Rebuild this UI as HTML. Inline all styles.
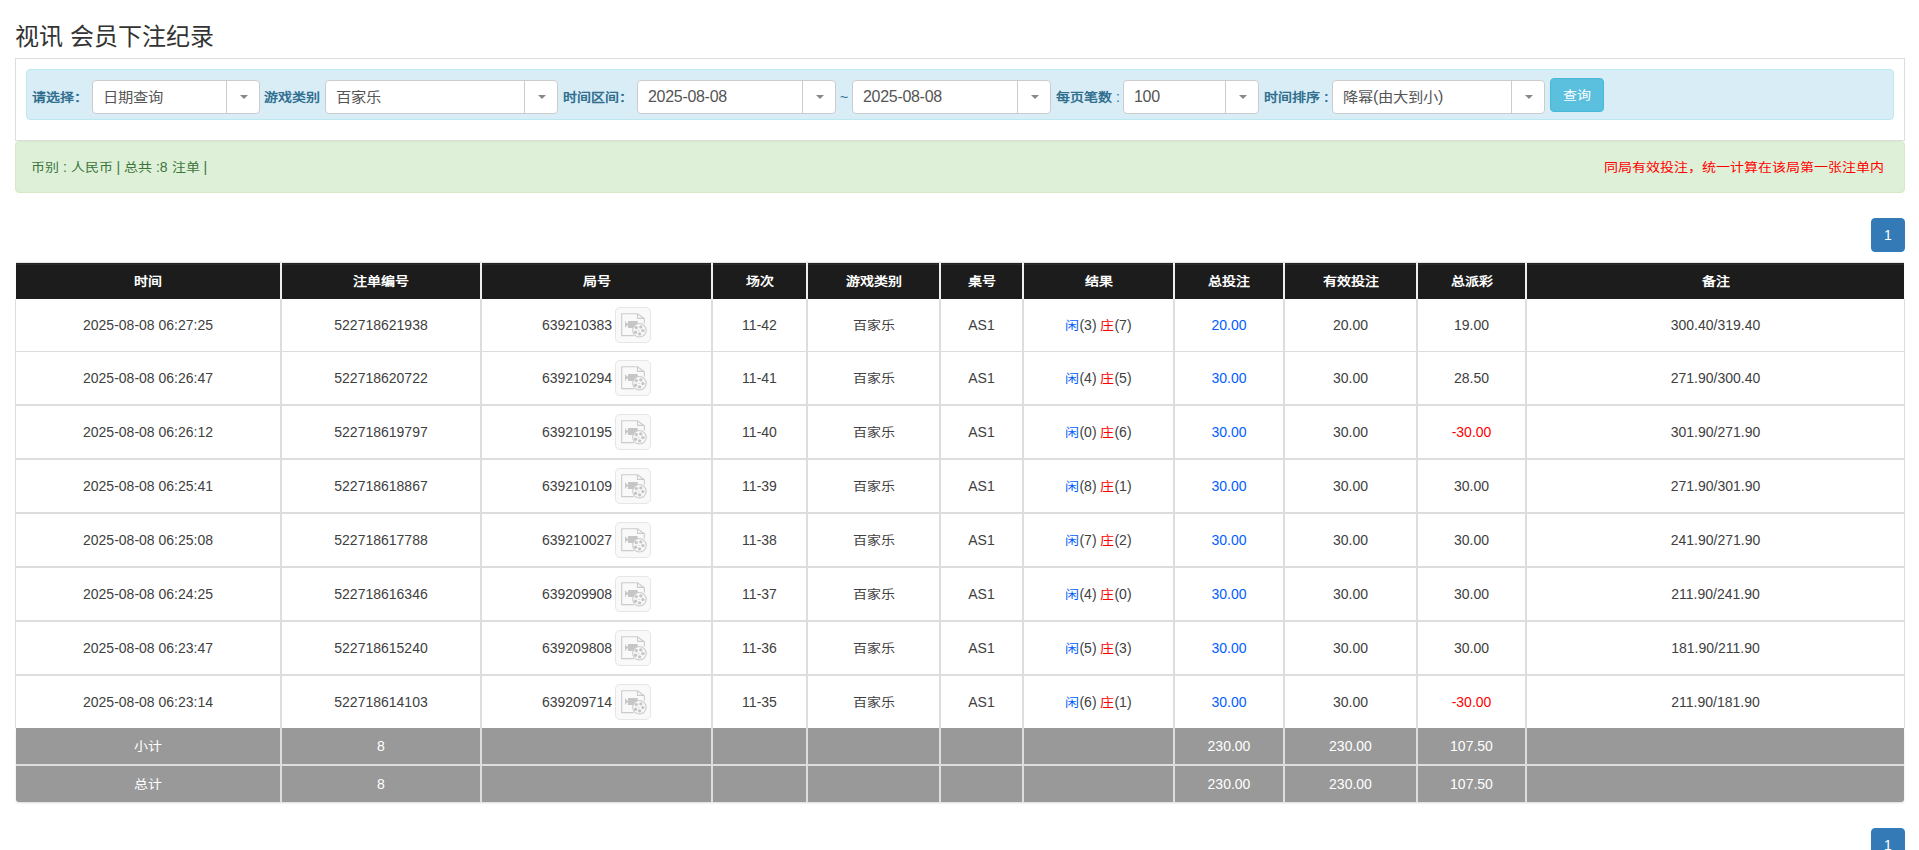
<!DOCTYPE html>
<html lang="zh-CN"><head><meta charset="utf-8"><title>视讯 会员下注纪录</title>
<style>
*{box-sizing:border-box}
html,body{margin:0;padding:0;background:#fff}
body{font-family:"Liberation Sans",sans-serif;font-size:14px;color:#333;width:1919px;height:850px;overflow:hidden;position:relative}
h3{position:absolute;left:15px;top:22px;margin:0;font-size:24px;font-weight:normal;line-height:30px;color:#333;white-space:nowrap}
.panel{position:absolute;left:15px;top:58px;width:1890px;height:83px;border:1px solid #ddd;background:#fff}
.info{position:absolute;left:26px;top:69px;width:1868px;height:51px;border:1px solid #bce8f1;background:#d9edf7;border-radius:4px}
.lb{position:absolute;top:86px;line-height:22px;font-weight:bold;color:#31708f;font-size:14px;white-space:nowrap}
.sel{position:absolute;top:80px;height:34px;border:1px solid #ccc;border-radius:4px;background:#fff}
.sel .t{position:absolute;left:10px;top:0;line-height:32px;font-size:16px;letter-spacing:-.3px;color:#555;white-space:nowrap}
.sel .dv{position:absolute;right:32px;top:0;width:1px;height:32px;background:#ccc}
.sel .ar{position:absolute;right:11px;top:14px;width:0;height:0;border-left:4px solid transparent;border-right:4px solid transparent;border-top:4.5px solid #888}
.btn{position:absolute;left:1550px;top:78px;width:54px;height:34px;background:#5bc0de;border:1px solid #46b8da;border-radius:4px;color:#fff;text-align:center;line-height:32px;font-size:14px}
.ok{position:absolute;left:15px;top:141px;width:1890px;height:52px;border:1px solid #d6e9c6;background:#dff0d8;border-radius:4px;font-size:14px}
.ok .l{position:absolute;left:15px;top:15px;line-height:20px;color:#3c763d;white-space:nowrap}
.ok .r{position:absolute;right:20px;top:15px;line-height:20px;color:#f00;white-space:nowrap}
.pg{position:absolute;left:1871px;width:34px;height:34px;background:#337ab7;border:1px solid #337ab7;border-radius:4px;color:#fff;text-align:center;line-height:32px;font-size:14px}
.thead{position:absolute;background:#1c1c1c;border-top:1px solid #222;box-shadow:inset 0 1px 0 #2b2b2b,0 -1px 1px rgba(0,0,0,.1)}
.tbody{position:absolute;background:#fff;border-left:1px solid #ddd;border-right:1px solid #ddd}
.tfoot{position:absolute;background:#999;border-radius:0 0 3px 3px;box-shadow:0 1px 2px rgba(0,0,0,.15)}
.c{position:absolute;display:flex;align-items:center;justify-content:center;white-space:nowrap;color:#404040}
.c>span{display:inline-flex;align-items:center;white-space:pre}
.th{color:#fff;font-weight:bold}
.tf{color:#fff}
.hl{position:absolute;left:16px;width:1888px;background:#ddd}
.fl{position:absolute;left:16px;width:1888px;background:#ddd}
.vs{position:absolute;width:2px}
.vs.h{background:#efefef}
.vs.d{background:#ddd}
.vs.f{background:#ddd}
.bl{color:#0060ff}
.rd{color:#f00}
.ib{display:inline-block;width:36px;height:36px;margin-left:3px;border:1px solid #e6e6e6;border-radius:5px;background:#f9f9f9;position:relative}
.ib svg{position:absolute;left:-1px;top:-1px}
i{font-style:normal;display:inline-block;transform:scaleY(.87);transform-origin:50% 58%}
.sel i{font-size:15.3px;letter-spacing:0;transform:scaleY(.86)}

</style></head>
<body>
<h3>视讯 会员下注纪录</h3>
<div class="panel"></div>
<div class="info"></div>
<div class="lb" style="left:32px"><i>请选择：</i></div>
<div class="sel" style="left:92px;width:168px"><span class="t"><i>日期查询</i></span><span class="dv"></span><span class="ar"></span></div>
<div class="lb" style="left:264px"><i>游戏类别</i></div>
<div class="sel" style="left:325px;width:233px"><span class="t"><i>百家乐</i></span><span class="dv"></span><span class="ar"></span></div>
<div class="lb" style="left:563px"><i>时间区间：</i></div>
<div class="sel" style="left:637px;width:199px"><span class="t">2025-08-08</span><span class="dv"></span><span class="ar"></span></div>
<div class="lb" style="left:840px;font-weight:normal">~</div>
<div class="sel" style="left:852px;width:199px"><span class="t">2025-08-08</span><span class="dv"></span><span class="ar"></span></div>
<div class="lb" style="left:1056px"><i>每页笔数</i><span style="font-weight:normal"> :</span></div>
<div class="sel" style="left:1123px;width:136px"><span class="t">100</span><span class="dv"></span><span class="ar"></span></div>
<div class="lb" style="left:1264px"><i>时间排序</i> :</div>
<div class="sel" style="left:1332px;width:213px"><span class="t"><i>降幂</i>(<i>由大到小</i>)</span><span class="dv"></span><span class="ar"></span></div>
<div class="btn"><i>查询</i></div>
<div class="ok"><span class="l"><i>币别</i> : <i>人民币</i> | <i>总共</i> :8 <i>注单</i> |</span><span class="r"><i>同局有效投注，统一计算在该局第一张注单内</i></span></div>
<div class="pg" style="top:218px">1</div>

<div class="thead" style="left:16px;top:263px;width:1888px;height:36px"></div>
<div class="c th" style="left:16px;top:263px;width:264px;height:36px"><span><i>时间</i></span></div>
<div class="c th" style="left:282px;top:263px;width:198px;height:36px"><span><i>注单编号</i></span></div>
<div class="c th" style="left:482px;top:263px;width:229px;height:36px"><span><i>局号</i></span></div>
<div class="c th" style="left:713px;top:263px;width:93px;height:36px"><span><i>场次</i></span></div>
<div class="c th" style="left:808px;top:263px;width:131px;height:36px"><span><i>游戏类别</i></span></div>
<div class="c th" style="left:941px;top:263px;width:81px;height:36px"><span><i>桌号</i></span></div>
<div class="c th" style="left:1024px;top:263px;width:149px;height:36px"><span><i>结果</i></span></div>
<div class="c th" style="left:1175px;top:263px;width:108px;height:36px"><span><i>总投注</i></span></div>
<div class="c th" style="left:1285px;top:263px;width:131px;height:36px"><span><i>有效投注</i></span></div>
<div class="c th" style="left:1418px;top:263px;width:107px;height:36px"><span><i>总派彩</i></span></div>
<div class="c th" style="left:1527px;top:263px;width:377px;height:36px"><span><i>备注</i></span></div>
<div class="tbody" style="left:15px;top:299px;width:1890px;height:429px"></div>
<div class="c" style="left:16px;top:299px;width:264px;height:52px"><span>2025-08-08 06:27:25</span></div>
<div class="c" style="left:282px;top:299px;width:198px;height:52px"><span>522718621938</span></div>
<div class="c" style="left:482px;top:299px;width:229px;height:52px"><span>639210383<span class="ib"><svg width="36" height="36" viewBox="0 0 36 36"><path d="M18.7 28.6H6.7V6.7h15.8l6.8 5v4.8" fill="none" stroke="#cbcbcb" stroke-width="1.1"/><path d="M22.5 6.7v4.7h6.8" fill="none" stroke="#cbcbcb" stroke-width="1.1"/><path d="M10 14L12 16.4H13V14H22.7V21H13V18.6H12L10 21Z" fill="#c6c6c6"/><circle cx="24.45" cy="23.3" r="6.75" fill="#f9f9f9" stroke="#cbcbcb" stroke-width="1.1"/><g fill="#c6c6c6"><circle cx="21.3" cy="20.6" r="1.7"/><circle cx="25.8" cy="19.9" r="1.7"/><circle cx="27.9" cy="23.6" r="1.7"/><circle cx="24.6" cy="26.9" r="1.7"/><circle cx="20.6" cy="25.3" r="1.7"/><circle cx="23.9" cy="23.4" r=".6"/></g></svg></span></span></div>
<div class="c" style="left:713px;top:299px;width:93px;height:52px"><span>11-42</span></div>
<div class="c" style="left:808px;top:299px;width:131px;height:52px"><span><i>百家乐</i></span></div>
<div class="c" style="left:941px;top:299px;width:81px;height:52px"><span>AS1</span></div>
<div class="c" style="left:1024px;top:299px;width:149px;height:52px"><span><span class="bl"><i>闲</i></span>(3) <span class="rd"><i>庄</i></span>(7)</span></div>
<div class="c" style="left:1175px;top:299px;width:108px;height:52px"><span><span class="bl">20.00</span></span></div>
<div class="c" style="left:1285px;top:299px;width:131px;height:52px"><span>20.00</span></div>
<div class="c" style="left:1418px;top:299px;width:107px;height:52px"><span>19.00</span></div>
<div class="c" style="left:1527px;top:299px;width:377px;height:52px"><span>300.40/319.40</span></div>
<div class="c" style="left:16px;top:352px;width:264px;height:52px"><span>2025-08-08 06:26:47</span></div>
<div class="c" style="left:282px;top:352px;width:198px;height:52px"><span>522718620722</span></div>
<div class="c" style="left:482px;top:352px;width:229px;height:52px"><span>639210294<span class="ib"><svg width="36" height="36" viewBox="0 0 36 36"><path d="M18.7 28.6H6.7V6.7h15.8l6.8 5v4.8" fill="none" stroke="#cbcbcb" stroke-width="1.1"/><path d="M22.5 6.7v4.7h6.8" fill="none" stroke="#cbcbcb" stroke-width="1.1"/><path d="M10 14L12 16.4H13V14H22.7V21H13V18.6H12L10 21Z" fill="#c6c6c6"/><circle cx="24.45" cy="23.3" r="6.75" fill="#f9f9f9" stroke="#cbcbcb" stroke-width="1.1"/><g fill="#c6c6c6"><circle cx="21.3" cy="20.6" r="1.7"/><circle cx="25.8" cy="19.9" r="1.7"/><circle cx="27.9" cy="23.6" r="1.7"/><circle cx="24.6" cy="26.9" r="1.7"/><circle cx="20.6" cy="25.3" r="1.7"/><circle cx="23.9" cy="23.4" r=".6"/></g></svg></span></span></div>
<div class="c" style="left:713px;top:352px;width:93px;height:52px"><span>11-41</span></div>
<div class="c" style="left:808px;top:352px;width:131px;height:52px"><span><i>百家乐</i></span></div>
<div class="c" style="left:941px;top:352px;width:81px;height:52px"><span>AS1</span></div>
<div class="c" style="left:1024px;top:352px;width:149px;height:52px"><span><span class="bl"><i>闲</i></span>(4) <span class="rd"><i>庄</i></span>(5)</span></div>
<div class="c" style="left:1175px;top:352px;width:108px;height:52px"><span><span class="bl">30.00</span></span></div>
<div class="c" style="left:1285px;top:352px;width:131px;height:52px"><span>30.00</span></div>
<div class="c" style="left:1418px;top:352px;width:107px;height:52px"><span>28.50</span></div>
<div class="c" style="left:1527px;top:352px;width:377px;height:52px"><span>271.90/300.40</span></div>
<div class="c" style="left:16px;top:406px;width:264px;height:52px"><span>2025-08-08 06:26:12</span></div>
<div class="c" style="left:282px;top:406px;width:198px;height:52px"><span>522718619797</span></div>
<div class="c" style="left:482px;top:406px;width:229px;height:52px"><span>639210195<span class="ib"><svg width="36" height="36" viewBox="0 0 36 36"><path d="M18.7 28.6H6.7V6.7h15.8l6.8 5v4.8" fill="none" stroke="#cbcbcb" stroke-width="1.1"/><path d="M22.5 6.7v4.7h6.8" fill="none" stroke="#cbcbcb" stroke-width="1.1"/><path d="M10 14L12 16.4H13V14H22.7V21H13V18.6H12L10 21Z" fill="#c6c6c6"/><circle cx="24.45" cy="23.3" r="6.75" fill="#f9f9f9" stroke="#cbcbcb" stroke-width="1.1"/><g fill="#c6c6c6"><circle cx="21.3" cy="20.6" r="1.7"/><circle cx="25.8" cy="19.9" r="1.7"/><circle cx="27.9" cy="23.6" r="1.7"/><circle cx="24.6" cy="26.9" r="1.7"/><circle cx="20.6" cy="25.3" r="1.7"/><circle cx="23.9" cy="23.4" r=".6"/></g></svg></span></span></div>
<div class="c" style="left:713px;top:406px;width:93px;height:52px"><span>11-40</span></div>
<div class="c" style="left:808px;top:406px;width:131px;height:52px"><span><i>百家乐</i></span></div>
<div class="c" style="left:941px;top:406px;width:81px;height:52px"><span>AS1</span></div>
<div class="c" style="left:1024px;top:406px;width:149px;height:52px"><span><span class="bl"><i>闲</i></span>(0) <span class="rd"><i>庄</i></span>(6)</span></div>
<div class="c" style="left:1175px;top:406px;width:108px;height:52px"><span><span class="bl">30.00</span></span></div>
<div class="c" style="left:1285px;top:406px;width:131px;height:52px"><span>30.00</span></div>
<div class="c" style="left:1418px;top:406px;width:107px;height:52px"><span><span class="rd">-30.00</span></span></div>
<div class="c" style="left:1527px;top:406px;width:377px;height:52px"><span>301.90/271.90</span></div>
<div class="c" style="left:16px;top:460px;width:264px;height:52px"><span>2025-08-08 06:25:41</span></div>
<div class="c" style="left:282px;top:460px;width:198px;height:52px"><span>522718618867</span></div>
<div class="c" style="left:482px;top:460px;width:229px;height:52px"><span>639210109<span class="ib"><svg width="36" height="36" viewBox="0 0 36 36"><path d="M18.7 28.6H6.7V6.7h15.8l6.8 5v4.8" fill="none" stroke="#cbcbcb" stroke-width="1.1"/><path d="M22.5 6.7v4.7h6.8" fill="none" stroke="#cbcbcb" stroke-width="1.1"/><path d="M10 14L12 16.4H13V14H22.7V21H13V18.6H12L10 21Z" fill="#c6c6c6"/><circle cx="24.45" cy="23.3" r="6.75" fill="#f9f9f9" stroke="#cbcbcb" stroke-width="1.1"/><g fill="#c6c6c6"><circle cx="21.3" cy="20.6" r="1.7"/><circle cx="25.8" cy="19.9" r="1.7"/><circle cx="27.9" cy="23.6" r="1.7"/><circle cx="24.6" cy="26.9" r="1.7"/><circle cx="20.6" cy="25.3" r="1.7"/><circle cx="23.9" cy="23.4" r=".6"/></g></svg></span></span></div>
<div class="c" style="left:713px;top:460px;width:93px;height:52px"><span>11-39</span></div>
<div class="c" style="left:808px;top:460px;width:131px;height:52px"><span><i>百家乐</i></span></div>
<div class="c" style="left:941px;top:460px;width:81px;height:52px"><span>AS1</span></div>
<div class="c" style="left:1024px;top:460px;width:149px;height:52px"><span><span class="bl"><i>闲</i></span>(8) <span class="rd"><i>庄</i></span>(1)</span></div>
<div class="c" style="left:1175px;top:460px;width:108px;height:52px"><span><span class="bl">30.00</span></span></div>
<div class="c" style="left:1285px;top:460px;width:131px;height:52px"><span>30.00</span></div>
<div class="c" style="left:1418px;top:460px;width:107px;height:52px"><span>30.00</span></div>
<div class="c" style="left:1527px;top:460px;width:377px;height:52px"><span>271.90/301.90</span></div>
<div class="c" style="left:16px;top:514px;width:264px;height:52px"><span>2025-08-08 06:25:08</span></div>
<div class="c" style="left:282px;top:514px;width:198px;height:52px"><span>522718617788</span></div>
<div class="c" style="left:482px;top:514px;width:229px;height:52px"><span>639210027<span class="ib"><svg width="36" height="36" viewBox="0 0 36 36"><path d="M18.7 28.6H6.7V6.7h15.8l6.8 5v4.8" fill="none" stroke="#cbcbcb" stroke-width="1.1"/><path d="M22.5 6.7v4.7h6.8" fill="none" stroke="#cbcbcb" stroke-width="1.1"/><path d="M10 14L12 16.4H13V14H22.7V21H13V18.6H12L10 21Z" fill="#c6c6c6"/><circle cx="24.45" cy="23.3" r="6.75" fill="#f9f9f9" stroke="#cbcbcb" stroke-width="1.1"/><g fill="#c6c6c6"><circle cx="21.3" cy="20.6" r="1.7"/><circle cx="25.8" cy="19.9" r="1.7"/><circle cx="27.9" cy="23.6" r="1.7"/><circle cx="24.6" cy="26.9" r="1.7"/><circle cx="20.6" cy="25.3" r="1.7"/><circle cx="23.9" cy="23.4" r=".6"/></g></svg></span></span></div>
<div class="c" style="left:713px;top:514px;width:93px;height:52px"><span>11-38</span></div>
<div class="c" style="left:808px;top:514px;width:131px;height:52px"><span><i>百家乐</i></span></div>
<div class="c" style="left:941px;top:514px;width:81px;height:52px"><span>AS1</span></div>
<div class="c" style="left:1024px;top:514px;width:149px;height:52px"><span><span class="bl"><i>闲</i></span>(7) <span class="rd"><i>庄</i></span>(2)</span></div>
<div class="c" style="left:1175px;top:514px;width:108px;height:52px"><span><span class="bl">30.00</span></span></div>
<div class="c" style="left:1285px;top:514px;width:131px;height:52px"><span>30.00</span></div>
<div class="c" style="left:1418px;top:514px;width:107px;height:52px"><span>30.00</span></div>
<div class="c" style="left:1527px;top:514px;width:377px;height:52px"><span>241.90/271.90</span></div>
<div class="c" style="left:16px;top:568px;width:264px;height:52px"><span>2025-08-08 06:24:25</span></div>
<div class="c" style="left:282px;top:568px;width:198px;height:52px"><span>522718616346</span></div>
<div class="c" style="left:482px;top:568px;width:229px;height:52px"><span>639209908<span class="ib"><svg width="36" height="36" viewBox="0 0 36 36"><path d="M18.7 28.6H6.7V6.7h15.8l6.8 5v4.8" fill="none" stroke="#cbcbcb" stroke-width="1.1"/><path d="M22.5 6.7v4.7h6.8" fill="none" stroke="#cbcbcb" stroke-width="1.1"/><path d="M10 14L12 16.4H13V14H22.7V21H13V18.6H12L10 21Z" fill="#c6c6c6"/><circle cx="24.45" cy="23.3" r="6.75" fill="#f9f9f9" stroke="#cbcbcb" stroke-width="1.1"/><g fill="#c6c6c6"><circle cx="21.3" cy="20.6" r="1.7"/><circle cx="25.8" cy="19.9" r="1.7"/><circle cx="27.9" cy="23.6" r="1.7"/><circle cx="24.6" cy="26.9" r="1.7"/><circle cx="20.6" cy="25.3" r="1.7"/><circle cx="23.9" cy="23.4" r=".6"/></g></svg></span></span></div>
<div class="c" style="left:713px;top:568px;width:93px;height:52px"><span>11-37</span></div>
<div class="c" style="left:808px;top:568px;width:131px;height:52px"><span><i>百家乐</i></span></div>
<div class="c" style="left:941px;top:568px;width:81px;height:52px"><span>AS1</span></div>
<div class="c" style="left:1024px;top:568px;width:149px;height:52px"><span><span class="bl"><i>闲</i></span>(4) <span class="rd"><i>庄</i></span>(0)</span></div>
<div class="c" style="left:1175px;top:568px;width:108px;height:52px"><span><span class="bl">30.00</span></span></div>
<div class="c" style="left:1285px;top:568px;width:131px;height:52px"><span>30.00</span></div>
<div class="c" style="left:1418px;top:568px;width:107px;height:52px"><span>30.00</span></div>
<div class="c" style="left:1527px;top:568px;width:377px;height:52px"><span>211.90/241.90</span></div>
<div class="c" style="left:16px;top:622px;width:264px;height:52px"><span>2025-08-08 06:23:47</span></div>
<div class="c" style="left:282px;top:622px;width:198px;height:52px"><span>522718615240</span></div>
<div class="c" style="left:482px;top:622px;width:229px;height:52px"><span>639209808<span class="ib"><svg width="36" height="36" viewBox="0 0 36 36"><path d="M18.7 28.6H6.7V6.7h15.8l6.8 5v4.8" fill="none" stroke="#cbcbcb" stroke-width="1.1"/><path d="M22.5 6.7v4.7h6.8" fill="none" stroke="#cbcbcb" stroke-width="1.1"/><path d="M10 14L12 16.4H13V14H22.7V21H13V18.6H12L10 21Z" fill="#c6c6c6"/><circle cx="24.45" cy="23.3" r="6.75" fill="#f9f9f9" stroke="#cbcbcb" stroke-width="1.1"/><g fill="#c6c6c6"><circle cx="21.3" cy="20.6" r="1.7"/><circle cx="25.8" cy="19.9" r="1.7"/><circle cx="27.9" cy="23.6" r="1.7"/><circle cx="24.6" cy="26.9" r="1.7"/><circle cx="20.6" cy="25.3" r="1.7"/><circle cx="23.9" cy="23.4" r=".6"/></g></svg></span></span></div>
<div class="c" style="left:713px;top:622px;width:93px;height:52px"><span>11-36</span></div>
<div class="c" style="left:808px;top:622px;width:131px;height:52px"><span><i>百家乐</i></span></div>
<div class="c" style="left:941px;top:622px;width:81px;height:52px"><span>AS1</span></div>
<div class="c" style="left:1024px;top:622px;width:149px;height:52px"><span><span class="bl"><i>闲</i></span>(5) <span class="rd"><i>庄</i></span>(3)</span></div>
<div class="c" style="left:1175px;top:622px;width:108px;height:52px"><span><span class="bl">30.00</span></span></div>
<div class="c" style="left:1285px;top:622px;width:131px;height:52px"><span>30.00</span></div>
<div class="c" style="left:1418px;top:622px;width:107px;height:52px"><span>30.00</span></div>
<div class="c" style="left:1527px;top:622px;width:377px;height:52px"><span>181.90/211.90</span></div>
<div class="c" style="left:16px;top:676px;width:264px;height:52px"><span>2025-08-08 06:23:14</span></div>
<div class="c" style="left:282px;top:676px;width:198px;height:52px"><span>522718614103</span></div>
<div class="c" style="left:482px;top:676px;width:229px;height:52px"><span>639209714<span class="ib"><svg width="36" height="36" viewBox="0 0 36 36"><path d="M18.7 28.6H6.7V6.7h15.8l6.8 5v4.8" fill="none" stroke="#cbcbcb" stroke-width="1.1"/><path d="M22.5 6.7v4.7h6.8" fill="none" stroke="#cbcbcb" stroke-width="1.1"/><path d="M10 14L12 16.4H13V14H22.7V21H13V18.6H12L10 21Z" fill="#c6c6c6"/><circle cx="24.45" cy="23.3" r="6.75" fill="#f9f9f9" stroke="#cbcbcb" stroke-width="1.1"/><g fill="#c6c6c6"><circle cx="21.3" cy="20.6" r="1.7"/><circle cx="25.8" cy="19.9" r="1.7"/><circle cx="27.9" cy="23.6" r="1.7"/><circle cx="24.6" cy="26.9" r="1.7"/><circle cx="20.6" cy="25.3" r="1.7"/><circle cx="23.9" cy="23.4" r=".6"/></g></svg></span></span></div>
<div class="c" style="left:713px;top:676px;width:93px;height:52px"><span>11-35</span></div>
<div class="c" style="left:808px;top:676px;width:131px;height:52px"><span><i>百家乐</i></span></div>
<div class="c" style="left:941px;top:676px;width:81px;height:52px"><span>AS1</span></div>
<div class="c" style="left:1024px;top:676px;width:149px;height:52px"><span><span class="bl"><i>闲</i></span>(6) <span class="rd"><i>庄</i></span>(1)</span></div>
<div class="c" style="left:1175px;top:676px;width:108px;height:52px"><span><span class="bl">30.00</span></span></div>
<div class="c" style="left:1285px;top:676px;width:131px;height:52px"><span>30.00</span></div>
<div class="c" style="left:1418px;top:676px;width:107px;height:52px"><span><span class="rd">-30.00</span></span></div>
<div class="c" style="left:1527px;top:676px;width:377px;height:52px"><span>211.90/181.90</span></div>
<div class="hl" style="top:351px;height:1px"></div>
<div class="hl" style="top:404px;height:2px"></div>
<div class="hl" style="top:458px;height:2px"></div>
<div class="hl" style="top:512px;height:2px"></div>
<div class="hl" style="top:566px;height:2px"></div>
<div class="hl" style="top:620px;height:2px"></div>
<div class="hl" style="top:674px;height:2px"></div>
<div class="tfoot" style="left:16px;top:728px;width:1888px;height:74px"></div>
<div class="fl" style="top:764px;height:2px"></div>
<div class="c tf" style="left:16px;top:728px;width:264px;height:36px"><span><i>小计</i></span></div>
<div class="c tf" style="left:282px;top:728px;width:198px;height:36px"><span>8</span></div>
<div class="c tf" style="left:1175px;top:728px;width:108px;height:36px"><span>230.00</span></div>
<div class="c tf" style="left:1285px;top:728px;width:131px;height:36px"><span>230.00</span></div>
<div class="c tf" style="left:1418px;top:728px;width:107px;height:36px"><span>107.50</span></div>
<div class="c tf" style="left:16px;top:766px;width:264px;height:36px"><span><i>总计</i></span></div>
<div class="c tf" style="left:282px;top:766px;width:198px;height:36px"><span>8</span></div>
<div class="c tf" style="left:1175px;top:766px;width:108px;height:36px"><span>230.00</span></div>
<div class="c tf" style="left:1285px;top:766px;width:131px;height:36px"><span>230.00</span></div>
<div class="c tf" style="left:1418px;top:766px;width:107px;height:36px"><span>107.50</span></div>
<div class="vs h" style="left:280px;top:263px;height:36px"></div>
<div class="vs d" style="left:280px;top:299px;height:429px"></div>
<div class="vs f" style="left:280px;top:728px;height:74px"></div>
<div class="vs h" style="left:480px;top:263px;height:36px"></div>
<div class="vs d" style="left:480px;top:299px;height:429px"></div>
<div class="vs f" style="left:480px;top:728px;height:74px"></div>
<div class="vs h" style="left:711px;top:263px;height:36px"></div>
<div class="vs d" style="left:711px;top:299px;height:429px"></div>
<div class="vs f" style="left:711px;top:728px;height:74px"></div>
<div class="vs h" style="left:806px;top:263px;height:36px"></div>
<div class="vs d" style="left:806px;top:299px;height:429px"></div>
<div class="vs f" style="left:806px;top:728px;height:74px"></div>
<div class="vs h" style="left:939px;top:263px;height:36px"></div>
<div class="vs d" style="left:939px;top:299px;height:429px"></div>
<div class="vs f" style="left:939px;top:728px;height:74px"></div>
<div class="vs h" style="left:1022px;top:263px;height:36px"></div>
<div class="vs d" style="left:1022px;top:299px;height:429px"></div>
<div class="vs f" style="left:1022px;top:728px;height:74px"></div>
<div class="vs h" style="left:1173px;top:263px;height:36px"></div>
<div class="vs d" style="left:1173px;top:299px;height:429px"></div>
<div class="vs f" style="left:1173px;top:728px;height:74px"></div>
<div class="vs h" style="left:1283px;top:263px;height:36px"></div>
<div class="vs d" style="left:1283px;top:299px;height:429px"></div>
<div class="vs f" style="left:1283px;top:728px;height:74px"></div>
<div class="vs h" style="left:1416px;top:263px;height:36px"></div>
<div class="vs d" style="left:1416px;top:299px;height:429px"></div>
<div class="vs f" style="left:1416px;top:728px;height:74px"></div>
<div class="vs h" style="left:1525px;top:263px;height:36px"></div>
<div class="vs d" style="left:1525px;top:299px;height:429px"></div>
<div class="vs f" style="left:1525px;top:728px;height:74px"></div>
<div class="pg" style="top:828px">1</div>
</body></html>
